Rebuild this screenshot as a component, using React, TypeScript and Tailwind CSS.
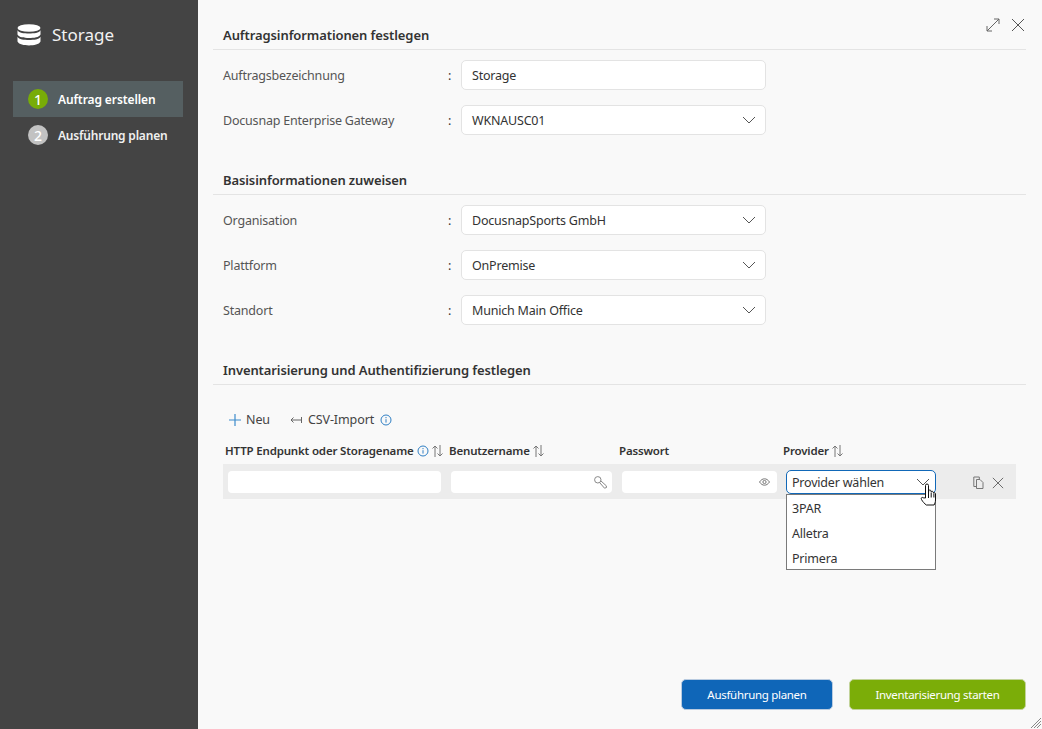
import React from "react";

const Chevron = () => (
  <svg width="14" height="8" viewBox="0 0 14 8" fill="none" stroke="#555" strokeWidth="1"><path d="M1 1l6 6 6-6" /></svg>
);
const Sort = () => (
  <svg width="11" height="12" viewBox="0 0 11 12" fill="none" stroke="#777" strokeWidth="1">
    <path d="M3 12V1M.5 3.5L3 1l2.5 2.5M8 0v11M5.5 8.5L8 11l2.5-2.5" />
  </svg>
);
const Info = () => (
  <svg width="12" height="12" viewBox="0 0 12 12" fill="none" stroke="#2f7fc4" strokeWidth="1">
    <circle cx="6" cy="6" r="5" /><path d="M6 5.2v3.4M6 3v1.2" />
  </svg>
);
const X = ({ s = 14, c = "#555" }: { s?: number; c?: string }) => (
  <svg width={s} height={s} viewBox="0 0 14 14" fill="none" stroke={c} strokeWidth="1"><path d="M1 1l12 12M13 1L1 13" /></svg>
);

const Section = ({ title, children, cls }: { title: string; children: React.ReactNode; cls: string }) => (
  <section className={cls}>
    <h2 className="h-[24px] border-b border-[#e4e4e4] pl-[10px] text-[13px] leading-[18px] font-semibold tracking-[-0.1px] text-[#333]">{title}</h2>
    {children}
  </section>
);

const Field = ({ label, value, select }: { label: string; value: string; select?: boolean }) => (
  <div className="flex h-[30px] items-center pl-[10px] text-[12.5px] tracking-[-0.2px] text-[#333]">
    <span className="w-[225px] pt-[2px] text-[#555]">{label}</span>
    <span className="w-[13px] pt-[2px] text-[#333]">:</span>
    <div className="flex h-[30px] w-[305px] items-center justify-between rounded-[5px] border border-[#e3e3e3] bg-white pl-[10px] pr-[9px]">
      <span className="pt-[2px]">{value}</span>
      {select && <Chevron />}
    </div>
  </div>
);

const Th = ({ w, children }: { w: string; children: React.ReactNode }) => (
  <div className={`flex items-center gap-[3px] ${w}`}>{children}</div>
);

export default function App() {
  return (
    <div className="relative flex h-[729px] w-[1042px] overflow-hidden bg-[#f9f9f9] font-['Noto_Sans','Open_Sans',sans-serif]">
      <aside className="flex w-[198px] shrink-0 flex-col bg-[#444444] pl-[13px] pr-[15px] text-white">
        <div className="mt-[17px] flex h-[35px] items-center gap-[11px] pl-[4px]">
          <svg width="24" height="22" viewBox="0 0 24 22" fill="white">
            <ellipse cx="12" cy="4" rx="11.5" ry="3.8" />
            <path d="M.5 6.2C2 9 7 9.4 12 9.4S22 9 23.5 6.2V10.5C22 13.4 17 14 12 14S2 13.4.5 10.5Z" />
            <path d="M.5 12.8C2 15.6 7 16 12 16s10-.4 11.5-3.2V17.5C22 20.6 17 21.4 12 21.4S2 20.6.5 17.5Z" />
          </svg>
          <span className="text-[17px] leading-none text-[#f2f2f2]">Storage</span>
        </div>
        <div className="mt-[29px] flex h-[36px] items-center gap-[10px] bg-[#555f61] pl-[15px] text-[12px] font-semibold tracking-[-0.1px]">
          <span className="flex h-[20px] w-[20px] items-center justify-center rounded-full bg-[#78ac08] text-[14px] font-medium">1</span>
          <span className="pt-[2px]">Auftrag erstellen</span>
        </div>
        <div className="flex h-[36px] items-center gap-[10px] pl-[15px] text-[12px] font-semibold tracking-[-0.2px] text-[#f0f0f0]">
          <span className="flex h-[20px] w-[20px] items-center justify-center rounded-full bg-[#c2c2c2] text-[14px] font-medium text-white">2</span>
          <span className="pt-[2px]">Ausführung planen</span>
        </div>
      </aside>

      <main className="flex min-w-0 flex-1 flex-col pl-[15px] pr-[16px]">
        <Section title="Auftragsinformationen festlegen" cls="mt-[26px]">
          <div className="mt-[10px] flex flex-col gap-[15px]">
            <Field label="Auftragsbezeichnung" value="Storage" />
            <Field label="Docusnap Enterprise Gateway" value="WKNAUSC01" select />
          </div>
        </Section>
        <Section title="Basisinformationen zuweisen" cls="mt-[36px]">
          <div className="mt-[10px] flex flex-col gap-[15px]">
            <Field label="Organisation" value="DocusnapSports GmbH" select />
            <Field label="Plattform" value="OnPremise" select />
            <Field label="Standort" value="Munich Main Office" select />
          </div>
        </Section>
        <Section title="Inventarisierung und Authentifizierung festlegen" cls="mt-[36px]">
          <div className="mt-[25px] flex h-[20px] items-center pl-[16px] text-[12.5px] tracking-[-0.1px] text-[#444]">
            <svg width="12" height="12" viewBox="0 0 12 12" fill="none" stroke="#3d8bcb" strokeWidth="1.2"><path d="M6 0v12M0 6h12" /></svg>
            <span className="ml-[5px]">Neu</span>
            <svg className="ml-[20px]" width="12" height="8" viewBox="0 0 12 8" fill="none" stroke="#666" strokeWidth="1"><path d="M11.5 1v6M11 4H1M3.5 1.5L1 4l2.5 2.5" /></svg>
            <span className="ml-[6px]">CSV-Import</span>
            <span className="ml-[6px] flex"><Info /></span>
          </div>
          <div className="mt-[11px] flex h-[20px] items-center pl-[12px] text-[11.5px] font-semibold tracking-[-0.17px] text-[#333]">
            <Th w="w-[224px]"><span className="whitespace-nowrap">HTTP Endpunkt oder Storagename</span><Info /><Sort /></Th>
            <Th w="w-[170px]"><span>Benutzername</span><Sort /></Th>
            <Th w="w-[164px]"><span>Passwort</span></Th>
            <Th w="w-[160px]"><span>Provider</span><Sort /></Th>
          </div>
          <div className="relative ml-[10px] mr-[10px] mt-[3px] flex h-[35px] items-center border-y border-[#ececec] bg-[#ececec] pl-[5px] text-[12.5px] tracking-[-0.2px] text-[#333]">
            <div className="mt-[1px] h-[22px] w-[213px] rounded-[4px] bg-white" />
            <div className="ml-[10px] mt-[1px] flex h-[22px] w-[161px] items-center justify-end rounded-[4px] bg-white pr-[5px]">
              <svg width="13" height="13" viewBox="0 0 13 13" fill="none" stroke="#888" strokeWidth="1"><circle cx="3.800" cy="3.800" r="3.200" /><path d="M5.800 6.800L10.500 12.200 12.500 11.500 12.300 9.800 7 5" /></svg>
            </div>
            <div className="ml-[10px] mt-[1px] flex h-[22px] w-[155px] items-center justify-end rounded-[4px] bg-white pr-[7px]">
              <svg width="11" height="8" viewBox="0 0 11 8" fill="none" stroke="#777" strokeWidth="1"><path d="M.5 4C2 1.800 3.700.8 5.500.8S9 1.800 10.500 4C9 6.200 7.300 7.200 5.500 7.200S2 6.200.5 4Z" /><circle cx="5.500" cy="4" r="1.600" /></svg>
            </div>
            <div className="ml-[9px] flex h-[24px] w-[150px] items-center justify-between rounded-[5px] border border-[#1168b8] bg-white pl-[5px] pr-[5px]">
              <span className="pt-[4px]">Provider wählen</span>
              <Chevron />
            </div>
            <svg className="ml-[37px] mt-[2px]" width="11" height="13" viewBox="0 0 11 13" fill="none" stroke="#777" strokeWidth="1"><path d="M3.500 10.500H.8V1h5.500v2.500" /><path d="M3.500 3.500h3.500l3 3v6h-6.500z" /></svg>
            <span className="ml-[8px] mt-[2px] flex"><X s={12} c="#555" /></span>

            <div className="absolute left-[563px] top-[29px] z-10 flex h-[76px] w-[150px] flex-col border border-[#7a7a7a] bg-white pl-[5px] pt-[1px] text-[12.5px]">
              <div className="flex h-[25px] shrink-0 items-center pt-[1px]">3PAR</div>
              <div className="flex h-[25px] shrink-0 items-center pt-[1px]">Alletra</div>
              <div className="flex h-[25px] shrink-0 items-center pt-[1px]">Primera</div>
            </div>
            <svg className="absolute left-[697px] top-[18px] z-20" width="17" height="25" viewBox="0 0 17 25" fill="white" stroke="#111" strokeWidth="1">
              <path d="M5.500 15V2.500a1.500 1.500 0 0 1 3 0V10l.200-2.300c.700-1 2-.8 2.300.2l.200 1c.600-.9 1.800-.7 2.100.3l.100.800c.700-.600 2-.300 2.100.8v6.200c0 2.500-.8 3.500-1.400 5H6.300C4.500 20.500 2.800 19 1.500 16.500c-.800-1.500.500-2.800 1.800-1.700Z" />
              <path d="M8.500 10v5M11.200 9.500v5M13.900 10.500v4" />
            </svg>
          </div>
        </Section>

        <div className="mt-auto mb-[19px] flex justify-end gap-[16px] text-[11.5px] tracking-[-0.3px] text-white">
          <button className="h-[31px] w-[152px] rounded-[5px] border border-[#b9cbe0] bg-[#0f66b8]">Ausführung planen</button>
          <button className="h-[31px] w-[177px] rounded-[5px] border border-[#c2d39a] bg-[#7bad08]">Inventarisierung starten</button>
        </div>
      </main>

      <div className="absolute right-[17px] top-[18px] flex items-center gap-[11px]">
        <svg width="14" height="14" viewBox="0 0 14 14" fill="none" stroke="#666" strokeWidth="1"><path d="M1 13L13 1M8 1H13V6M1 8V13H6" /></svg>
        <X />
      </div>
      <svg className="absolute bottom-[1px] right-[1px]" width="10" height="10" viewBox="0 0 10 10" stroke="#888" strokeWidth="1"><path d="M0 10L10 0M3 10L10 3M6 10L10 6" /></svg>
    </div>
  );
}
